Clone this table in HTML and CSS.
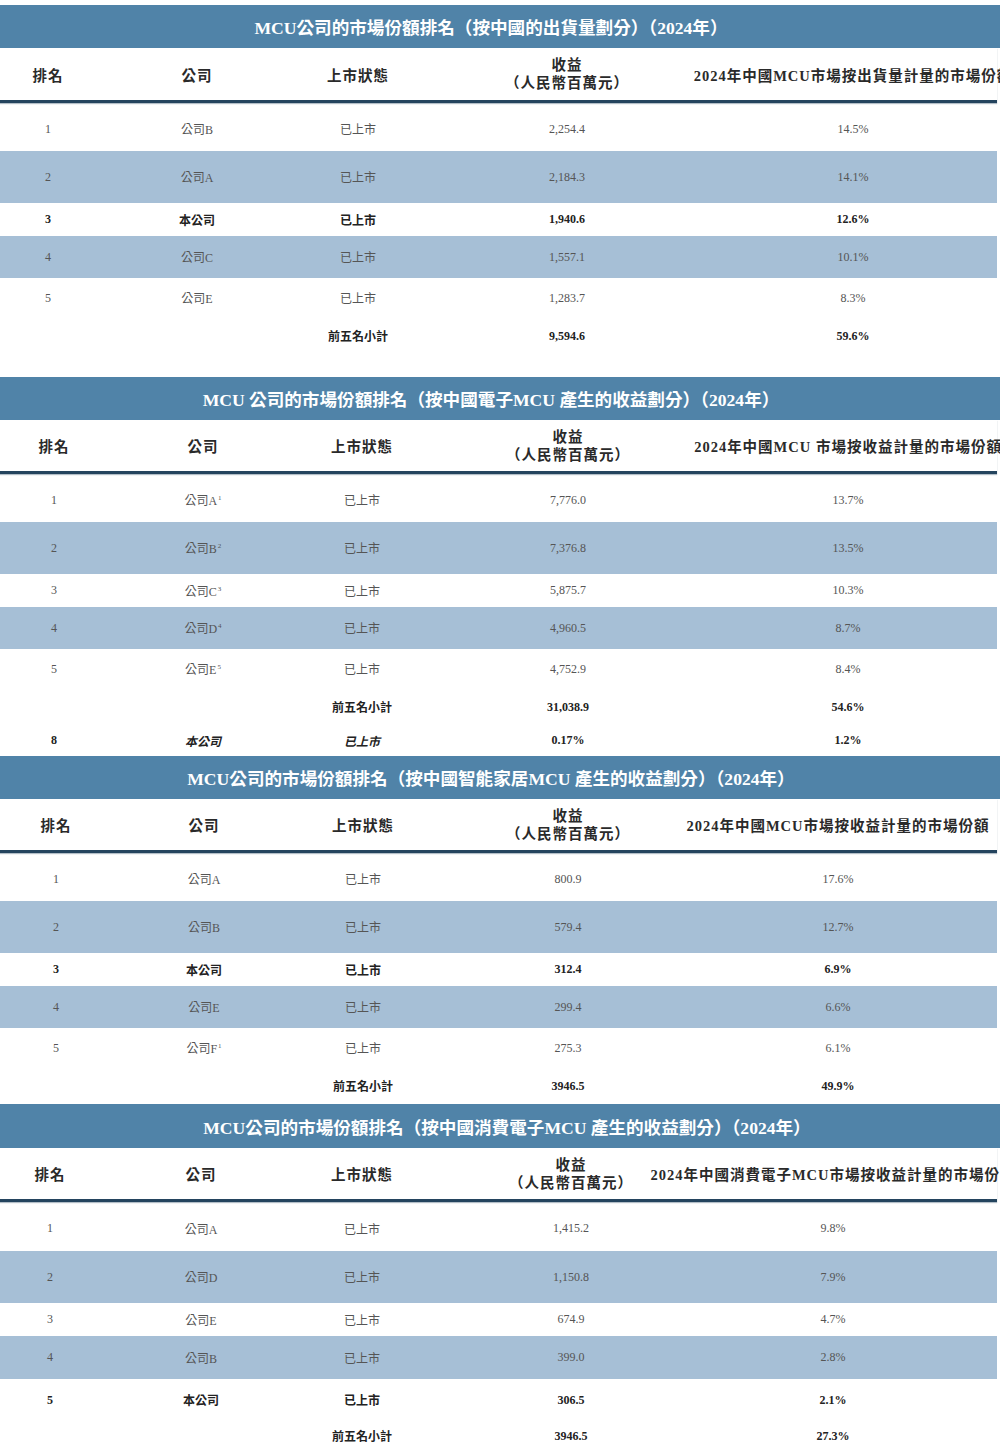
FILE: index.html
```
<!DOCTYPE html>
<html lang="zh-Hant">
<head>
<meta charset="utf-8">
<title>MCU公司的市場份額排名</title>
<link rel="stylesheet" href="styles.css">
</head>
<body>
<main class="page">

<section class="tbl t1">
  <div class="title">MCU公司的市場份額排名（按中國的出貨量劃分）（2024年）</div>
  <div class="row head">
    <div class="cell">排名</div>
    <div class="cell">公司</div>
    <div class="cell">上市狀態</div>
    <div class="cell stack"><span>收益</span><span>（人民幣百萬元）</span></div>
    <div class="cell">2024年中國MCU市場按出貨量計量的市場份額</div>
  </div>
  <div class="row r1"><div class="cell">1</div><div class="cell">公司B</div><div class="cell">已上市</div><div class="cell">2,254.4</div><div class="cell">14.5%</div></div>
  <div class="row r2 blue"><div class="cell">2</div><div class="cell">公司A</div><div class="cell">已上市</div><div class="cell">2,184.3</div><div class="cell">14.1%</div></div>
  <div class="row r3 strong"><div class="cell">3</div><div class="cell">本公司</div><div class="cell">已上市</div><div class="cell">1,940.6</div><div class="cell">12.6%</div></div>
  <div class="row r4 blue"><div class="cell">4</div><div class="cell">公司C</div><div class="cell">已上市</div><div class="cell">1,557.1</div><div class="cell">10.1%</div></div>
  <div class="row r5"><div class="cell">5</div><div class="cell">公司E</div><div class="cell">已上市</div><div class="cell">1,283.7</div><div class="cell">8.3%</div></div>
  <div class="row rsub strong"><div class="cell"></div><div class="cell"></div><div class="cell">前五名小計</div><div class="cell">9,594.6</div><div class="cell">59.6%</div></div>
</section>

<section class="tbl t2">
  <div class="title">MCU 公司的市場份額排名（按中國電子MCU 產生的收益劃分）（2024年）</div>
  <div class="row head">
    <div class="cell">排名</div>
    <div class="cell">公司</div>
    <div class="cell">上市狀態</div>
    <div class="cell stack"><span>收益</span><span>（人民幣百萬元）</span></div>
    <div class="cell">2024年中國MCU 市場按收益計量的市場份額</div>
  </div>
  <div class="row r1"><div class="cell"><span>1</span></div><div class="cell"><span>公司A<sup>1</sup></span></div><div class="cell">已上市</div><div class="cell">7,776.0</div><div class="cell">13.7%</div></div>
  <div class="row r2 blue"><div class="cell">2</div><div class="cell"><span>公司B<sup>2</sup></span></div><div class="cell">已上市</div><div class="cell">7,376.8</div><div class="cell">13.5%</div></div>
  <div class="row r3"><div class="cell">3</div><div class="cell"><span>公司C<sup>3</sup></span></div><div class="cell">已上市</div><div class="cell">5,875.7</div><div class="cell">10.3%</div></div>
  <div class="row r4 blue"><div class="cell">4</div><div class="cell"><span>公司D<sup>4</sup></span></div><div class="cell">已上市</div><div class="cell">4,960.5</div><div class="cell">8.7%</div></div>
  <div class="row r5"><div class="cell">5</div><div class="cell"><span>公司E<sup>5</sup></span></div><div class="cell">已上市</div><div class="cell">4,752.9</div><div class="cell">8.4%</div></div>
  <div class="row rsub strong"><div class="cell"></div><div class="cell"></div><div class="cell">前五名小計</div><div class="cell">31,038.9</div><div class="cell">54.6%</div></div>
  <div class="row r8 strong"><div class="cell">8</div><div class="cell em">本公司</div><div class="cell em">已上市</div><div class="cell">0.17%</div><div class="cell">1.2%</div></div>
</section>

<section class="tbl t3">
  <div class="title">MCU公司的市場份額排名（按中國智能家居MCU 產生的收益劃分）（2024年）</div>
  <div class="row head">
    <div class="cell">排名</div>
    <div class="cell">公司</div>
    <div class="cell">上市狀態</div>
    <div class="cell stack"><span>收益</span><span>（人民幣百萬元）</span></div>
    <div class="cell">2024年中國MCU市場按收益計量的市場份額</div>
  </div>
  <div class="row r1"><div class="cell">1</div><div class="cell">公司A</div><div class="cell">已上市</div><div class="cell">800.9</div><div class="cell">17.6%</div></div>
  <div class="row r2 blue"><div class="cell">2</div><div class="cell">公司B</div><div class="cell">已上市</div><div class="cell">579.4</div><div class="cell">12.7%</div></div>
  <div class="row r3 strong"><div class="cell">3</div><div class="cell">本公司</div><div class="cell">已上市</div><div class="cell">312.4</div><div class="cell">6.9%</div></div>
  <div class="row r4 blue"><div class="cell">4</div><div class="cell">公司E</div><div class="cell">已上市</div><div class="cell">299.4</div><div class="cell">6.6%</div></div>
  <div class="row r5"><div class="cell">5</div><div class="cell"><span>公司F<sup>1</sup></span></div><div class="cell">已上市</div><div class="cell">275.3</div><div class="cell">6.1%</div></div>
  <div class="row rsub strong"><div class="cell"></div><div class="cell"></div><div class="cell">前五名小計</div><div class="cell">3946.5</div><div class="cell">49.9%</div></div>
</section>

<section class="tbl t4">
  <div class="title">MCU公司的市場份額排名（按中國消費電子MCU 產生的收益劃分）（2024年）</div>
  <div class="row head">
    <div class="cell">排名</div>
    <div class="cell">公司</div>
    <div class="cell">上市狀態</div>
    <div class="cell stack"><span>收益</span><span>（人民幣百萬元）</span></div>
    <div class="cell">2024年中國消費電子MCU市場按收益計量的市場份額</div>
  </div>
  <div class="row r1"><div class="cell">1</div><div class="cell">公司A</div><div class="cell">已上市</div><div class="cell">1,415.2</div><div class="cell">9.8%</div></div>
  <div class="row r2 blue"><div class="cell">2</div><div class="cell">公司D</div><div class="cell">已上市</div><div class="cell">1,150.8</div><div class="cell">7.9%</div></div>
  <div class="row r3"><div class="cell">3</div><div class="cell">公司E</div><div class="cell">已上市</div><div class="cell">674.9</div><div class="cell">4.7%</div></div>
  <div class="row r4 blue"><div class="cell">4</div><div class="cell">公司B</div><div class="cell">已上市</div><div class="cell">399.0</div><div class="cell">2.8%</div></div>
  <div class="row r5 strong"><div class="cell">5</div><div class="cell">本公司</div><div class="cell">已上市</div><div class="cell">306.5</div><div class="cell">2.1%</div></div>
  <div class="row rsub strong"><div class="cell"></div><div class="cell"></div><div class="cell">前五名小計</div><div class="cell">3946.5</div><div class="cell">27.3%</div></div>
</section>

</main>
</body>
</html>
```

FILE: styles.css
```
html, body {
  margin: 0;
  padding: 0;
  background: #ffffff;
}

body {
  width: 1000px;
  overflow: hidden;
  font-family: "Liberation Serif", "Noto Sans CJK TC", serif;
  color: #555555;
}

.page {
  padding-top: 5px;
}

.t1 { --cols: 96px 202px 120px 298px 274px; margin-bottom: 23px; }
.t2 { --cols: 108px 190px 128px 284px 276px; }
.t3 { --cols: 112px 184px 134px 276px 264px; }
.t4 { --cols: 100px 202px 120px 298px 226px; }

.title {
  height: 43px;
  background: #5083a8;
  color: #ffffff;
  font-weight: 700;
  font-size: 17.6px;
  letter-spacing: 0;
  display: flex;
  align-items: center;
  justify-content: center;
  padding-right: 18px;
  white-space: nowrap;
}

.t4 .title {
  height: 44px;
  padding-right: 0;
  padding-left: 14px;
}

.row {
  display: grid;
  grid-template-columns: var(--cols);
  width: 997px;
  box-sizing: border-box;
}

.cell {
  display: flex;
  align-items: center;
  justify-content: center;
  white-space: nowrap;
  font-size: 12px;
  min-width: 0;
}

.cell sup {
  font-size: 7px;
  line-height: 1;
  vertical-align: 5px;
  margin-left: 1px;
}

.head {
  height: 54px;
  border-bottom: 3px solid #24445e;
  box-shadow: 0 1px 1px rgba(36, 68, 94, 0.35);
  color: #2a2a2a;
}

.t1 .head { height: 55px; }

.head .cell {
  font-size: 14.5px;
  font-weight: 700;
  letter-spacing: 1px;
}

.head .stack {
  flex-direction: column;
  line-height: 18px;
}

.blue { background: #a6bfd6; }

.r1 { height: 48px; padding-top: 4px; }
.r2 { height: 52px; }
.r3 { height: 33px; }
.r4 { height: 42px; }
.r5 { height: 40px; }
.rsub { height: 36px; }
.r8 { height: 31px; }

.t4 .r1 { height: 49px; }
.t4 .r4 { height: 43px; }
.t4 .r5 { height: 42px; }
.t4 .rsub { height: 30px; }

.strong { color: #222222; }
.strong .cell { font-weight: 700; }
.em { font-style: italic; }
```
